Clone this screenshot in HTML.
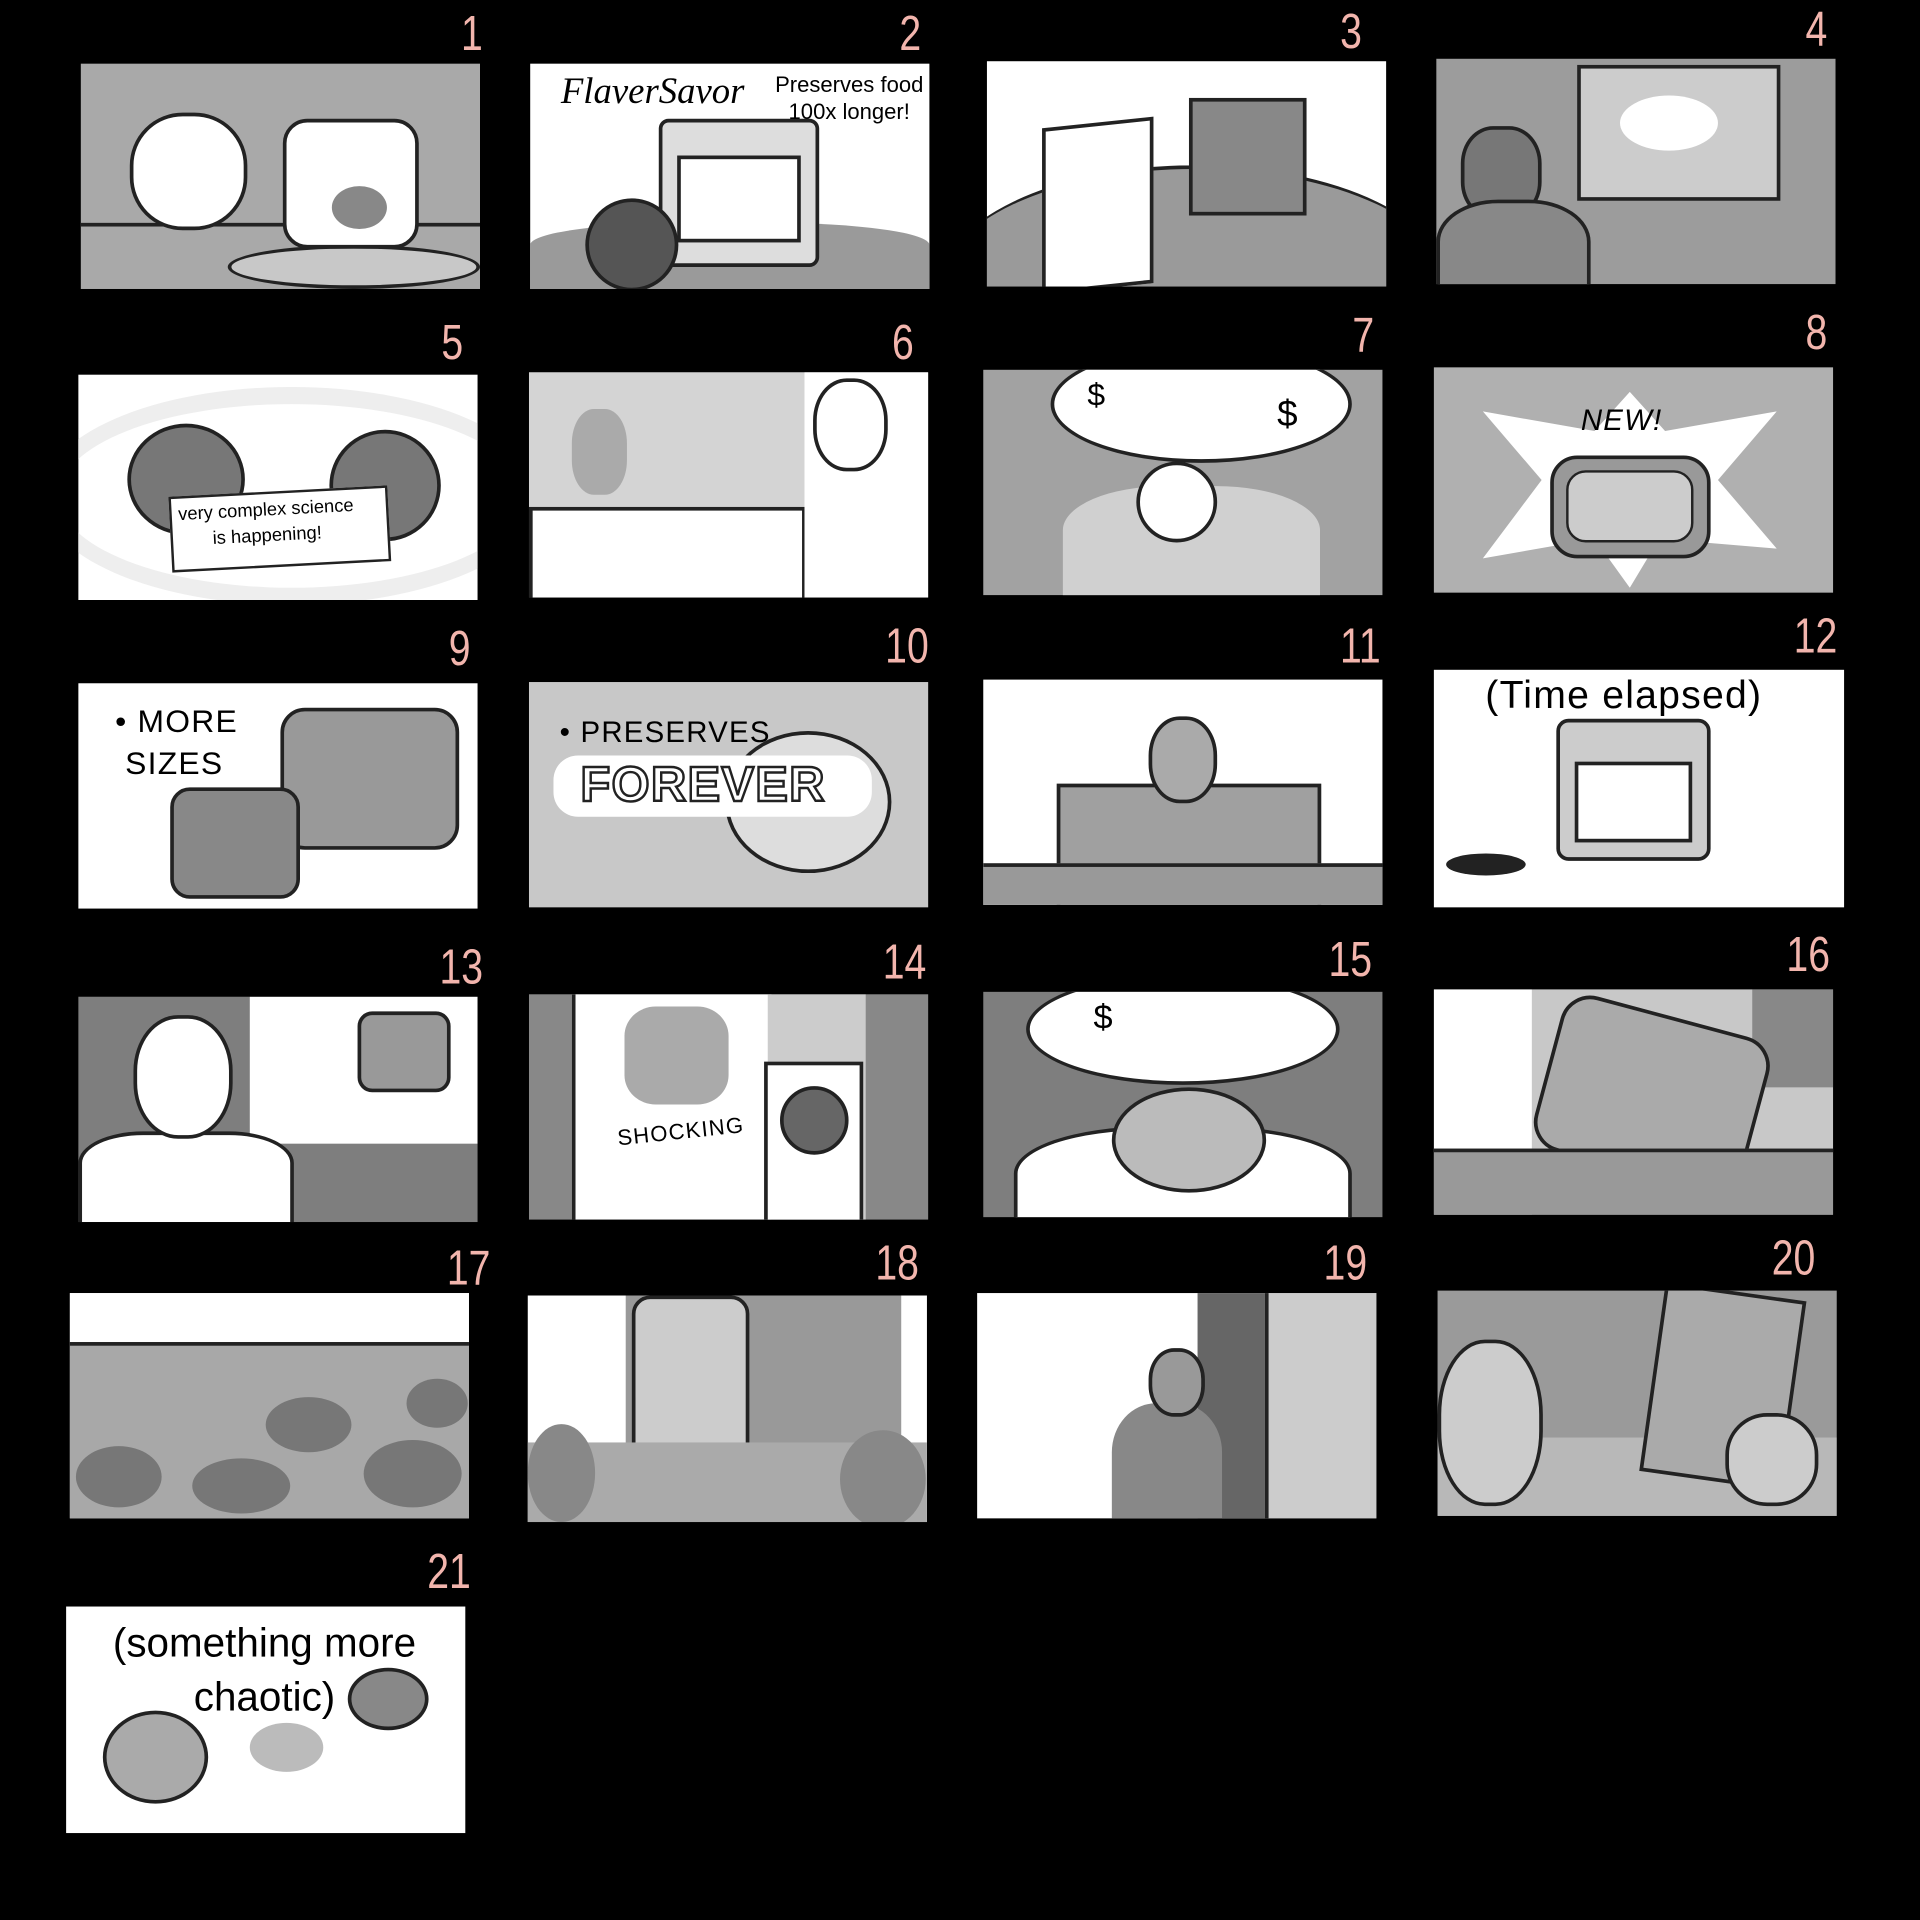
<!DOCTYPE html>
<html><head><meta charset="utf-8">
<style>
html,body{margin:0;padding:0;background:#000;width:1920px;height:1920px;overflow:hidden}
#s{position:absolute;left:0;top:0;width:1568px;height:1568px;transform:scale(1.22449);transform-origin:0 0;font-family:"Liberation Sans",sans-serif}
.p{position:absolute;width:326px;height:184px;background:#fff;overflow:hidden}
.n{position:absolute;color:#f2b5ad;font-family:"Liberation Sans",sans-serif;font-size:40px;font-weight:400;transform:scaleX(0.8);transform-origin:right top}
.a{position:absolute}
.t{position:absolute;color:#000;white-space:nowrap}
.hand{font-family:"Liberation Sans",sans-serif;letter-spacing:1px}
</style></head><body><div id="s">

<!-- numbers -->
<div class="n" style="left:372px;top:6px">1</div>
<div class="n" style="left:730px;top:6px">2</div>
<div class="n" style="left:1090px;top:4px">3</div>
<div class="n" style="left:1470px;top:2px">4</div>
<div class="n" style="left:356px;top:258px">5</div>
<div class="n" style="left:724px;top:258px">6</div>
<div class="n" style="left:1100px;top:252px">7</div>
<div class="n" style="left:1470px;top:250px">8</div>
<div class="n" style="left:362px;top:508px">9</div>
<div class="n" style="left:714px;top:506px">10</div>
<div class="n" style="left:1086px;top:506px">11</div>
<div class="n" style="left:1456px;top:498px">12</div>
<div class="n" style="left:350px;top:768px">13</div>
<div class="n" style="left:712px;top:764px">14</div>
<div class="n" style="left:1076px;top:762px">15</div>
<div class="n" style="left:1450px;top:758px">16</div>
<div class="n" style="left:356px;top:1014px">17</div>
<div class="n" style="left:706px;top:1010px">18</div>
<div class="n" style="left:1072px;top:1010px">19</div>
<div class="n" style="left:1438px;top:1006px">20</div>
<div class="n" style="left:340px;top:1262px">21</div>

<!-- 1 -->
<div class="p" style="left:66px;top:52px;background:#a9a9a9">
 <div class="a" style="left:120px;top:148px;width:200px;height:30px;border-radius:50%;border:3px solid #222;background:#c8c8c8"></div>
 <div class="a" style="left:0;top:130px;width:326px;height:3px;background:#222"></div>
 <div class="a" style="left:40px;top:40px;width:90px;height:90px;border-radius:45%;border:3px solid #222;background:#fff"></div>
 <div class="a" style="left:165px;top:45px;width:105px;height:100px;border-radius:20px;border:3px solid #222;background:#fff"></div>
 <div class="a" style="left:205px;top:100px;width:45px;height:35px;border-radius:50%;background:#888"></div>
</div>
<!-- 2 -->
<div class="p" style="left:433px;top:52px">
 <div class="a" style="left:0;top:130px;width:326px;height:60px;background:#9a9a9a;border-radius:40% 40% 0 0/30% 30% 0 0"></div>
 <div class="a" style="left:105px;top:45px;width:125px;height:115px;border:3px solid #222;border-radius:8px;background:#ddd"></div>
 <div class="a" style="left:120px;top:75px;width:95px;height:65px;border:3px solid #222;background:#fff"></div>
 <div class="a" style="left:45px;top:110px;width:70px;height:70px;border-radius:50%;border:3px solid #222;background:#555"></div>
 <div class="t" style="left:25px;top:6px;font-family:'Liberation Serif',serif;font-style:italic;font-size:30px">FlaverSavor</div>
 <div class="t" style="left:200px;top:6px;font-size:18px;text-align:center;line-height:22px">Preserves food<br>100x longer!</div>
</div>
<!-- 3 -->
<div class="p" style="left:806px;top:50px">
 <div class="a" style="left:-40px;top:85px;width:420px;height:200px;border-radius:50%;background:#9a9a9a;border-top:3px solid #222"></div>
 <div class="a" style="left:45px;top:50px;width:85px;height:130px;border:3px solid #222;background:#fff;transform:skewY(-6deg)"></div>
 <div class="a" style="left:165px;top:30px;width:90px;height:90px;border:3px solid #222;background:#888"></div>
</div>
<!-- 4 -->
<div class="p" style="left:1173px;top:48px;background:#9c9c9c">
 <div class="a" style="left:115px;top:5px;width:160px;height:105px;border:3px solid #222;background:#ccc"></div>
 <div class="a" style="left:150px;top:30px;width:80px;height:45px;border-radius:50%;background:#fff"></div>
 <div class="a" style="left:20px;top:55px;width:60px;height:70px;border-radius:40%;border:3px solid #222;background:#777"></div>
 <div class="a" style="left:0;top:115px;width:120px;height:80px;border-radius:40% 40% 0 0;border:3px solid #222;background:#888"></div>
</div>
<!-- 5 -->
<div class="p" style="left:64px;top:306px">
 <div class="a" style="left:-30px;top:10px;width:380px;height:150px;border:14px solid #eee;border-radius:50%"></div>
 <div class="a" style="left:40px;top:40px;width:90px;height:85px;border-radius:50%;border:3px solid #222;background:#777"></div>
 <div class="a" style="left:205px;top:45px;width:85px;height:85px;border-radius:50%;border:3px solid #222;background:#777"></div>
 <div class="a" style="left:75px;top:95px;width:175px;height:58px;border:2px solid #222;background:#fff;transform:rotate(-3deg)"></div>
 <div class="t" style="left:82px;top:100px;font-size:15px;text-align:center;line-height:21px;transform:rotate(-3deg)">very complex science<br>is happening!</div>
</div>
<!-- 6 -->
<div class="p" style="left:432px;top:304px;background:#d4d4d4">
 <div class="a" style="left:0;top:110px;width:220px;height:80px;border:3px solid #222;background:#fff"></div>
 <div class="a" style="left:225px;top:0;width:101px;height:184px;background:#fff"></div>
 <div class="a" style="left:232px;top:5px;width:55px;height:70px;border-radius:45%;border:3px solid #222;background:#fff"></div>
 <div class="a" style="left:35px;top:30px;width:45px;height:70px;border-radius:40%;background:#aaa"></div>
</div>
<!-- 7 -->
<div class="p" style="left:803px;top:302px;background:#a2a2a2">
 <div class="a" style="left:55px;top:-20px;width:240px;height:90px;border-radius:50%;border:3px solid #222;background:#fff"></div>
 <div class="a" style="left:65px;top:95px;width:210px;height:90px;border-radius:40% 40% 0 0;background:#d0d0d0"></div>
 <div class="a" style="left:125px;top:75px;width:60px;height:60px;border-radius:50%;border:3px solid #222;background:#fff"></div>
 <div class="t" style="left:85px;top:5px;font-size:26px">$</div><div class="t" style="left:240px;top:20px;font-size:30px">$</div>
</div>
<!-- 8 -->
<div class="p" style="left:1171px;top:300px;background:#b0b0b0">
 <div class="a" style="left:40px;top:20px;width:240px;height:160px;background:#fff;clip-path:polygon(50% 0,62% 20%,100% 10%,80% 45%,100% 80%,60% 75%,50% 100%,38% 75%,0 85%,20% 45%,0 10%,38% 20%)"></div>
 <div class="a" style="left:95px;top:72px;width:125px;height:78px;border:3px solid #222;border-radius:22px;background:#999"></div>
 <div class="a" style="left:108px;top:84px;width:100px;height:55px;border:2px solid #222;border-radius:16px;background:#ccc"></div>
 <div class="t hand" style="left:120px;top:30px;font-size:24px;font-style:italic">NEW!</div>
</div>
<!-- 9 -->
<div class="p" style="left:64px;top:558px">
 <div class="a" style="left:165px;top:20px;width:140px;height:110px;border:3px solid #222;border-radius:20px;background:#999"></div>
 <div class="a" style="left:75px;top:85px;width:100px;height:85px;border:3px solid #222;border-radius:16px;background:#888"></div>
 <div class="t hand" style="left:30px;top:14px;font-size:26px;line-height:34px">• MORE<br>&nbsp;SIZES</div>
</div>
<!-- 10 -->
<div class="p" style="left:432px;top:557px;background:#c8c8c8">
 <div class="a" style="left:160px;top:40px;width:130px;height:110px;border-radius:50%;border:3px solid #222;background:#ddd"></div>
 <div class="a" style="left:20px;top:60px;width:260px;height:50px;background:#fff;border-radius:20px"></div>
 <div class="t hand" style="left:25px;top:28px;font-size:24px">• PRESERVES</div>
 <div class="t hand" style="left:42px;top:62px;font-size:40px;font-weight:bold;color:#fff;-webkit-text-stroke:2px #222">FOREVER</div>
</div>
<!-- 11 -->
<div class="p" style="left:803px;top:555px">
 <div class="a" style="left:60px;top:85px;width:210px;height:110px;background:#a0a0a0;border:3px solid #222"></div>
 <div class="a" style="left:0;top:150px;width:326px;height:40px;background:#999;border-top:3px solid #222"></div>
 <div class="a" style="left:135px;top:30px;width:50px;height:65px;border-radius:45%;border:3px solid #222;background:#aaa"></div>
</div>
<!-- 12 -->
<div class="p" style="left:1171px;top:547px;width:335px;height:194px">
 <div class="a" style="left:100px;top:40px;width:120px;height:110px;border:3px solid #222;border-radius:10px;background:#ccc"></div>
 <div class="a" style="left:115px;top:75px;width:90px;height:60px;border:3px solid #222;background:#fff"></div>
 <div class="a" style="left:10px;top:150px;width:65px;height:18px;background:#222;border-radius:50%"></div>
 <div class="t hand" style="left:42px;top:2px;font-size:32px">(Time elapsed)</div>
</div>
<!-- 13 -->
<div class="p" style="left:64px;top:814px;background:#7e7e7e">
 <div class="a" style="left:140px;top:0;width:186px;height:120px;background:#fff"></div>
 <div class="a" style="left:228px;top:12px;width:70px;height:60px;border:3px solid #222;border-radius:12px;background:#999"></div>
 <div class="a" style="left:0;top:110px;width:170px;height:80px;background:#fff;border:3px solid #222;border-radius:30% 30% 0 0"></div>
 <div class="a" style="left:45px;top:15px;width:75px;height:95px;border-radius:45%;border:3px solid #222;background:#fff"></div>
</div>
<!-- 14 -->
<div class="p" style="left:432px;top:812px;background:#888">
 <div class="a" style="left:35px;top:0;width:160px;height:184px;background:#fff;border-left:3px solid #222"></div>
 <div class="a" style="left:195px;top:0;width:80px;height:184px;background:#ccc"></div>
 <div class="a" style="left:192px;top:55px;width:75px;height:130px;background:#fff;border:3px solid #222"></div>
 <div class="a" style="left:78px;top:10px;width:85px;height:80px;background:#aaa;border-radius:30%"></div>
 <div class="a" style="left:205px;top:75px;width:50px;height:50px;border-radius:50%;border:3px solid #222;background:#666"></div>
 <div class="t hand" style="left:72px;top:102px;font-size:18px;transform:rotate(-6deg)">SHOCKING</div>
</div>
<!-- 15 -->
<div class="p" style="left:803px;top:810px;background:#7e7e7e">
 <div class="a" style="left:35px;top:-15px;width:250px;height:85px;border-radius:50%;border:3px solid #222;background:#fff"></div>
 <div class="a" style="left:25px;top:110px;width:270px;height:90px;border-radius:40% 40% 0 0;border:3px solid #222;background:#fff"></div>
 <div class="a" style="left:105px;top:78px;width:120px;height:80px;border-radius:50%;border:3px solid #222;background:#bbb"></div>
 <div class="t" style="left:90px;top:5px;font-size:28px">$</div>
</div>
<!-- 16 -->
<div class="p" style="left:1171px;top:808px;background:#c8c8c8">
 <div class="a" style="left:0;top:0;width:80px;height:184px;background:#fff"></div>
 <div class="a" style="left:260px;top:0;width:66px;height:80px;background:#888"></div>
 <div class="a" style="left:90px;top:20px;width:170px;height:125px;border:3px solid #222;border-radius:25px;background:#aaa;transform:rotate(15deg)"></div>
 <div class="a" style="left:0;top:130px;width:326px;height:60px;background:#999;border-top:3px solid #222"></div>
</div>
<!-- 17 -->
<div class="p" style="left:57px;top:1056px;background:#c8c8c8">
 <div class="a" style="left:0;top:0;width:326px;height:40px;background:#fff"></div>
 <div class="a" style="left:0;top:40px;width:326px;height:150px;background:#a8a8a8;border-top:3px solid #222"></div>
 <div class="a" style="left:5px;top:125px;width:70px;height:50px;border-radius:50%;background:#777"></div>
 <div class="a" style="left:100px;top:135px;width:80px;height:45px;border-radius:50%;background:#777"></div>
 <div class="a" style="left:160px;top:85px;width:70px;height:45px;border-radius:50%;background:#777"></div>
 <div class="a" style="left:240px;top:120px;width:80px;height:55px;border-radius:50%;background:#777"></div>
 <div class="a" style="left:275px;top:70px;width:50px;height:40px;border-radius:50%;background:#777"></div>
</div>
<!-- 18 -->
<div class="p" style="left:431px;top:1058px;height:185px">
 <div class="a" style="left:80px;top:0;width:225px;height:185px;background:#999"></div>
 <div class="a" style="left:85px;top:0;width:90px;height:155px;border:3px solid #222;border-radius:15px;background:#ccc"></div>
 <div class="a" style="left:0;top:120px;width:326px;height:70px;background:#aaa"></div>
 <div class="a" style="left:0;top:105px;width:55px;height:80px;border-radius:50%;background:#888"></div>
 <div class="a" style="left:255px;top:110px;width:70px;height:80px;border-radius:50%;background:#888"></div>
</div>
<!-- 19 -->
<div class="p" style="left:798px;top:1056px">
 <div class="a" style="left:180px;top:0;width:146px;height:184px;background:#666"></div>
 <div class="a" style="left:235px;top:0;width:91px;height:184px;background:#ccc;border-left:3px solid #222"></div>
 <div class="a" style="left:110px;top:90px;width:90px;height:100px;border-radius:40% 40% 0 0;background:#888"></div>
 <div class="a" style="left:140px;top:45px;width:40px;height:50px;border-radius:45%;background:#999;border:3px solid #222"></div>
</div>
<!-- 20 -->
<div class="p" style="left:1174px;top:1054px;background:#9a9a9a">
 <div class="a" style="left:0;top:120px;width:326px;height:70px;background:#b8b8b8"></div>
 <div class="a" style="left:0;top:40px;width:80px;height:130px;border-radius:45%;background:#ccc;border:3px solid #222"></div>
 <div class="a" style="left:175px;top:0;width:110px;height:150px;background:#aaa;border:3px solid #222;transform:rotate(8deg)"></div>
 <div class="a" style="left:235px;top:100px;width:70px;height:70px;border-radius:45%;background:#ccc;border:3px solid #222"></div>
</div>
<!-- 21 -->
<div class="p" style="left:54px;top:1312px;height:185px">
 <div class="a" style="left:30px;top:85px;width:80px;height:70px;border-radius:50%;border:3px solid #222;background:#aaa"></div>
 <div class="a" style="left:150px;top:95px;width:60px;height:40px;border-radius:50%;background:#bbb"></div>
 <div class="a" style="left:230px;top:50px;width:60px;height:45px;border-radius:50%;border:3px solid #222;background:#888"></div>
 <div class="t" style="left:12px;top:8px;font-size:33px;text-align:center;line-height:44px;width:300px">(something more<br>chaotic)</div>
</div>

</div></body></html>
